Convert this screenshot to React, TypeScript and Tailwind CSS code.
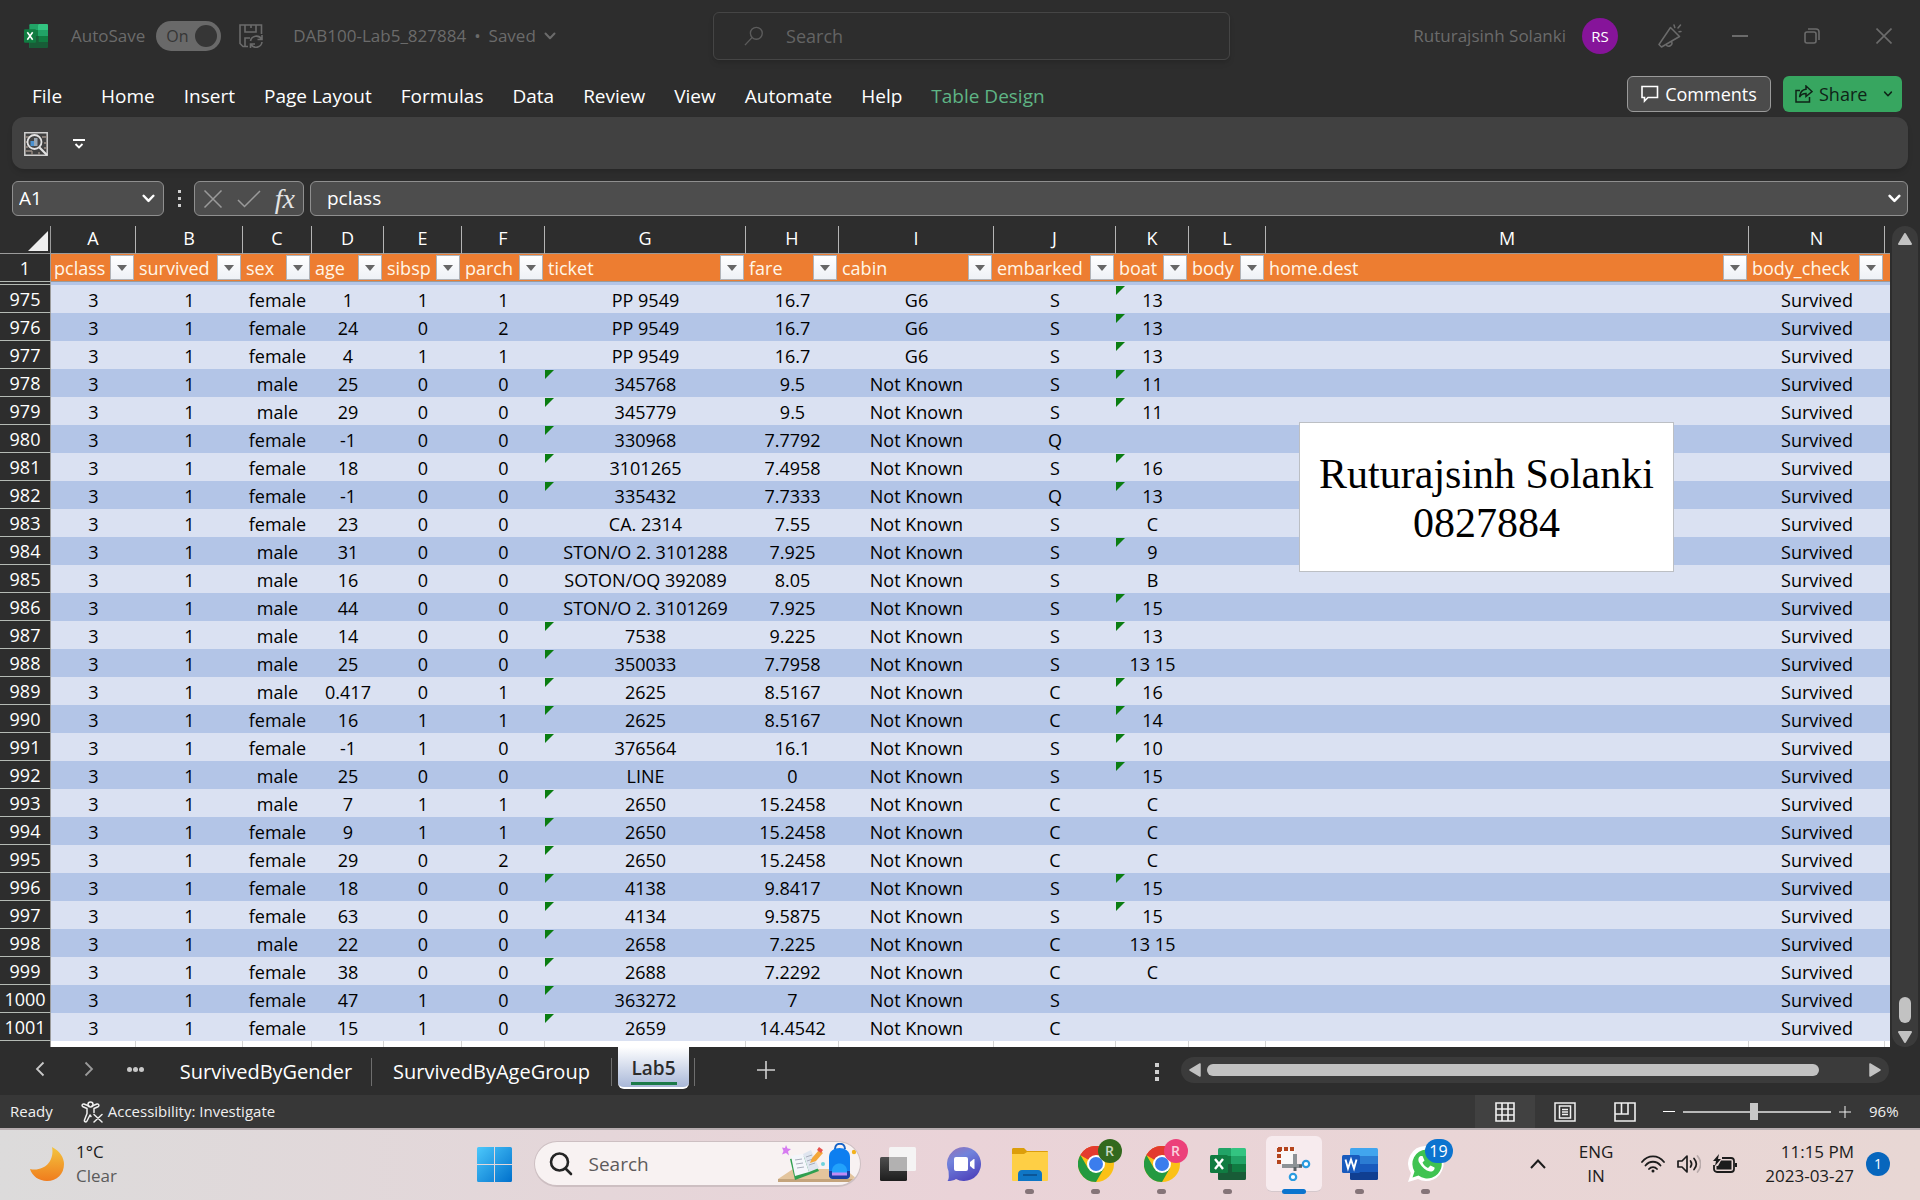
import React from "react";

type Row = {
  n: number;
  sex: string;
  age: string;
  sibsp: string;
  parch: string;
  ticket: string;
  fare: string;
  cabin: string;
  embarked: string;
  boat: string;
};

const NK = "Not Known";

// n, sex, age, sibsp, parch, ticket, fare, cabin, embarked, boat
const raw: [number, string, string, string, string, string, string, string, string, string][] = [
  [975, "female", "1", "1", "1", "PP 9549", "16.7", "G6", "S", "13"],
  [976, "female", "24", "0", "2", "PP 9549", "16.7", "G6", "S", "13"],
  [977, "female", "4", "1", "1", "PP 9549", "16.7", "G6", "S", "13"],
  [978, "male", "25", "0", "0", "345768", "9.5", NK, "S", "11"],
  [979, "male", "29", "0", "0", "345779", "9.5", NK, "S", "11"],
  [980, "female", "-1", "0", "0", "330968", "7.7792", NK, "Q", ""],
  [981, "female", "18", "0", "0", "3101265", "7.4958", NK, "S", "16"],
  [982, "female", "-1", "0", "0", "335432", "7.7333", NK, "Q", "13"],
  [983, "female", "23", "0", "0", "CA. 2314", "7.55", NK, "S", "C"],
  [984, "male", "31", "0", "0", "STON/O 2. 3101288", "7.925", NK, "S", "9"],
  [985, "male", "16", "0", "0", "SOTON/OQ 392089", "8.05", NK, "S", "B"],
  [986, "male", "44", "0", "0", "STON/O 2. 3101269", "7.925", NK, "S", "15"],
  [987, "male", "14", "0", "0", "7538", "9.225", NK, "S", "13"],
  [988, "male", "25", "0", "0", "350033", "7.7958", NK, "S", "13 15"],
  [989, "male", "0.417", "0", "1", "2625", "8.5167", NK, "C", "16"],
  [990, "female", "16", "1", "1", "2625", "8.5167", NK, "C", "14"],
  [991, "female", "-1", "1", "0", "376564", "16.1", NK, "S", "10"],
  [992, "male", "25", "0", "0", "LINE", "0", NK, "S", "15"],
  [993, "male", "7", "1", "1", "2650", "15.2458", NK, "C", "C"],
  [994, "female", "9", "1", "1", "2650", "15.2458", NK, "C", "C"],
  [995, "female", "29", "0", "2", "2650", "15.2458", NK, "C", "C"],
  [996, "female", "18", "0", "0", "4138", "9.8417", NK, "S", "15"],
  [997, "female", "63", "0", "0", "4134", "9.5875", NK, "S", "15"],
  [998, "male", "22", "0", "0", "2658", "7.225", NK, "C", "13 15"],
  [999, "female", "38", "0", "0", "2688", "7.2292", NK, "C", "C"],
  [1000, "female", "47", "1", "0", "363272", "7", NK, "S", ""],
  [1001, "female", "15", "1", "0", "2659", "14.4542", NK, "C", ""],
];

const rows: Row[] = raw.map(([n, sex, age, sibsp, parch, ticket, fare, cabin, embarked, boat]) => ({
  n, sex, age, sibsp, parch, ticket, fare, cabin, embarked, boat,
}));

const columns = [
  { letter: "A", name: "pclass", width: "w-[85px]" },
  { letter: "B", name: "survived", width: "w-[107px]" },
  { letter: "C", name: "sex", width: "w-[69px]" },
  { letter: "D", name: "age", width: "w-[72px]" },
  { letter: "E", name: "sibsp", width: "w-[78px]" },
  { letter: "F", name: "parch", width: "w-[83px]" },
  { letter: "G", name: "ticket", width: "w-[201px]" },
  { letter: "H", name: "fare", width: "w-[93px]" },
  { letter: "I", name: "cabin", width: "w-[155px]" },
  { letter: "J", name: "embarked", width: "w-[122px]" },
  { letter: "K", name: "boat", width: "w-[73px]" },
  { letter: "L", name: "body", width: "w-[77px]" },
  { letter: "M", name: "home.dest", width: "w-auto" },
  { letter: "N", name: "body_check", width: "w-[136px]" },
];

const isNumeric = (s: string) => /^\d+$/.test(s);

function Chevron({ className = "w-3 h-2", width = 2 }: { className?: string; width?: number }) {
  return (
    <svg viewBox="0 0 12 8" className={className} fill="none" stroke="currentColor" strokeWidth={width} strokeLinecap="round" strokeLinejoin="round">
      <path d="M1.5 1.5 6 6.2 10.5 1.5" />
    </svg>
  );
}

function ExcelLogo({ className }: { className: string }) {
  return (
    <svg viewBox="0 0 36 32" preserveAspectRatio="none" className={className}>
      <rect x="8" y="0" width="14" height="32" rx="1.5" fill="#21a366" />
      <rect x="21" y="0" width="15" height="9" rx="1.5" fill="#33c481" />
      <rect x="8" y="8" width="14" height="8" fill="#107c41" />
      <rect x="21" y="8" width="15" height="8" fill="#21a366" />
      <rect x="21" y="16" width="15" height="8" fill="#107c41" />
      <path d="M8 16h14v8h14v6.500a1.500 1.500 0 0 1-1.500 1.500h-25A1.500 1.500 0 0 1 8 30.500z" fill="#185c37" />
      <rect x="0" y="7" width="18" height="18" rx="1.500" fill="#107c41" />
      <path d="m5 11 8 10M13 11 5 21" stroke="#fff" strokeWidth="2.400" fill="none" />
    </svg>
  );
}

function WordLogo() {
  return (
    <svg viewBox="0 0 36 32" className="h-8 w-9">
      <rect x="8" y="0" width="28" height="9" rx="1.500" fill="#41a5ee" />
      <rect x="8" y="8" width="28" height="8" fill="#2b7cd3" />
      <rect x="8" y="16" width="28" height="8" fill="#185abd" />
      <path d="M8 24h28v6.500a1.500 1.500 0 0 1-1.500 1.500h-25A1.500 1.500 0 0 1 8 30.500z" fill="#103f91" />
      <rect x="0" y="7" width="18" height="18" rx="1.500" fill="#185abd" />
      <path d="m3.500 11.500 2.500 9 3-9 3 9 2.500-9" stroke="#fff" strokeWidth="1.900" fill="none" />
    </svg>
  );
}

function ChromeLogo() {
  return (
    <svg viewBox="0 0 36 36" className="size-9">
      <circle cx="18" cy="18" r="18" fill="#fbc116" />
      <path d="M18 18 2.400 9A18 18 0 0 1 33.600 9H18z" fill="#e33b2e" />
      <path d="M2.400 9A18 18 0 0 0 18 36l7.800-13.500L10.200 22.500z" fill="#249a41" />
      <path d="M2.400 9A18 18 0 0 1 33.600 9H18l-7.800 4.500z" fill="#e33b2e" />
      <circle cx="18" cy="18" r="9" fill="#fff" />
      <circle cx="18" cy="18" r="7" fill="#3b7ded" />
    </svg>
  );
}

function TitleBar() {
  return (
    <header className="flex h-[72px] items-center text-[17px] text-[#6b6b6b]">
      <div className="flex min-w-0 flex-1 items-center pl-6">
        <ExcelLogo className="h-6 w-6" />
        <label className="ml-[23px] flex items-center gap-[11px]">
          AutoSave
          <input type="checkbox" defaultChecked className="peer sr-only" />
          <span className="flex h-[30px] w-[65px] items-center justify-between rounded-full bg-[#696969] pr-1 pl-2.5 text-base text-[#363636]">
            On
            <span className="size-[22px] rounded-full bg-[#363636]" />
          </span>
        </label>
        <button aria-label="Save" className="ml-[18px]">
          <svg viewBox="0 0 24 24" className="size-6" fill="none" stroke="currentColor" strokeWidth="1.600">
            <path d="M9 22.500H4L1 19.500V1h21.500v9M6 1v7h11V1M6 22v-8h5M12 1v3" />
            <path d="M11.500 17a6 6 0 0 1 11-2M23 11v4.500h-4.500M23 18a6 6 0 0 1-11 2.500M11.500 24v-4h4.500" />
          </svg>
        </button>
        <button className="ml-[30px] flex items-center gap-2 whitespace-nowrap">
          <span>DAB100-Lab5_827884</span>
          <span>•</span>
          <span>Saved</span>
          <Chevron className="h-2 w-3" />
        </button>
      </div>
      <label className="flex h-12 w-[517px] items-center gap-[22px] rounded-md border border-[#454545] pl-[30px] text-[#5c5c5c] shadow-md">
        <svg viewBox="0 0 22 22" className="size-[22px]" fill="none" stroke="currentColor" strokeWidth="1.500">
          <circle cx="13.500" cy="8" r="6.500" />
          <path d="M9 12.500 1 21" />
        </svg>
        <input aria-label="Search" placeholder="Search" className="w-full bg-transparent text-lg outline-none placeholder:text-[#646464]" />
      </label>
      <div className="flex w-[690px] items-center justify-end">
        <span className="whitespace-nowrap">Ruturajsinh Solanki</span>
        <span className="ml-4 grid size-9 place-items-center rounded-full bg-[#86149a] text-[15px] text-white">RS</span>
        <button aria-label="What's new" className="grid w-[104px] place-items-center">
          <svg viewBox="0 0 24 24" className="size-6" fill="none" stroke="currentColor" strokeWidth="1.500" strokeLinejoin="round" strokeLinecap="round">
            <path d="M12.500 3.500 1 20.500 3.500 23l18-10.500zM8 20.500a3 3 0 0 0 5.500-3M16 1l.8 2.500M22.500 1 20 4M23 7.500l-2 .2" />
          </svg>
        </button>
        <button aria-label="Minimize" className="grid w-9 place-items-center">
          <span className="h-0.5 w-4 bg-current" />
        </button>
        <button aria-label="Restore" className="ml-9 grid w-9 place-items-center">
          <svg viewBox="0 0 16 16" className="size-4" fill="none" stroke="currentColor" strokeWidth="1.600">
            <rect x="1" y="4" width="11" height="11" rx="2" />
            <path d="M4 1h8a3 3 0 0 1 3 3v8" />
          </svg>
        </button>
        <button aria-label="Close" className="mr-[18px] ml-9 grid w-9 place-items-center">
          <svg viewBox="0 0 16 16" className="size-4" fill="none" stroke="currentColor" strokeWidth="1.600">
            <path d="m.5.5 15 15M15.500.5l-15 15" />
          </svg>
        </button>
      </div>
    </header>
  );
}

const menus = ["File", "Home", "Insert", "Page Layout", "Formulas", "Data", "Review", "View", "Automate", "Help"];

function MenuBar() {
  return (
    <nav className="flex h-[45px] items-start pr-[18px] pl-[18px] text-[19px] text-white">
      <div className="flex h-12 flex-1 items-center gap-px">
        {menus.map((m) => (
          <button key={m} className="px-[14px] whitespace-nowrap first:mr-2.5">{m}</button>
        ))}
        <button className="px-[14px] whitespace-nowrap text-[#5fb585]">Table Design</button>
      </div>
      <div className="flex gap-3 pt-1">
        <button className="flex h-9 w-[144px] items-center justify-center gap-1.5 rounded-md border border-[#9a9a9a] bg-[#4b4b4b] text-lg">
          <svg viewBox="0 0 18 18" className="size-[18px]" fill="none" stroke="currentColor" strokeWidth="1.600">
            <path d="M1 1.500h15.500v11H7L3.500 16v-3.500H1z" />
          </svg>
          Comments
        </button>
        <button className="flex h-9 w-[119px] items-center gap-1.5 rounded-md bg-[#37a660] pl-3 text-lg text-[#0f2417]">
          <svg viewBox="0 0 18 18" className="size-[18px]" fill="none" stroke="currentColor" strokeWidth="1.500">
            <path d="M5 5.500H1V17h13.500v-5M11 1l6 5.500-6 5V8.500c-3 0-5 1-6.500 3.500C5 8 7 4.500 11 4.200z" />
          </svg>
          Share
          <Chevron className="ml-2.5 h-1.5 w-2.5" />
        </button>
      </div>
    </nav>
  );
}

function FormulaBar() {
  const box = "flex h-[35px] items-center rounded-md border border-[#8f8f8f] bg-[#4d4d4d]";
  return (
    <div className="mt-3 flex px-3 text-lg text-white">
      <label className={`${box} w-[152px] pr-2 pl-1.5`}>
        <input aria-label="Name box" defaultValue="A1" className="w-full min-w-0 bg-transparent text-[19px] outline-none" />
        <Chevron className="h-[9px] w-[13px] shrink-0" width={2.2} />
      </label>
      <span className="flex w-[30px] flex-col items-center justify-center gap-1">
        <i className="size-[3px] bg-[#d0d0d0]" />
        <i className="size-[3px] bg-[#d0d0d0]" />
        <i className="size-[3px] bg-[#d0d0d0]" />
      </span>
      <div className={`${box} w-[110px] justify-between px-2 text-[#9a9a9a]`}>
        <button aria-label="Cancel">
          <svg viewBox="0 0 20 18" className="h-[18px] w-5" fill="none" stroke="currentColor" strokeWidth="1.500"><path d="m1.500.5 17 17M18.500.5l-17 17" /></svg>
        </button>
        <button aria-label="Enter">
          <svg viewBox="0 0 24 18" className="h-[18px] w-6" fill="none" stroke="currentColor" strokeWidth="1.500"><path d="m1 10 6.500 6.500L23 1" /></svg>
        </button>
        <button aria-label="Insert function" className="font-['Liberation_Serif',serif] text-[28px] leading-none text-[#e4e4e4] italic">fx</button>
      </div>
      <label className={`${box} ml-1.5 flex-1 pr-1.5 pl-4`}>
        <input aria-label="Formula" defaultValue="pclass" className="w-full bg-transparent text-[19px] outline-none" />
        <Chevron className="h-[9px] w-[13px]" width={2.4} />
      </label>
    </div>
  );
}

function Cell({ v, flag, odd }: { v: string; flag?: boolean; odd: boolean }) {
  return (
    <td className={`relative h-7 p-0 pt-0.5 text-center leading-[26px] whitespace-nowrap ${odd ? "bg-[#b3c5e7]" : "bg-[#dae1f2]"}`}>
      {flag && <i className="absolute top-px left-0 h-[9px] w-[9px] bg-[#0a7d12] [clip-path:polygon(0_0,100%_0,0_100%)]" />}
      {v}
    </td>
  );
}

function Sheet() {
  const head = "border-r border-r-[#9b9b9b] border-b border-b-[#b4bab4] bg-[#2d2d2d] p-0 text-center font-normal text-white";
  return (
    <div className="relative min-w-0 flex-1">
      <table className="w-full table-fixed border-separate border-spacing-0 text-lg text-black">
        <colgroup>
          <col className="w-[51px]" />
          {columns.map((c) => <col key={c.letter} className={c.width} />)}
          <col className="w-[5px]" />
        </colgroup>
        <thead>
          <tr>
            <th className="h-7 border-r border-b border-r-[#9b9b9b] border-b-[#9b9b9b] p-0">
              <svg viewBox="0 0 20 20" className="mt-0.5 mr-0.5 ml-auto size-5"><path d="M20 0v20H0z" fill="#efefef" /></svg>
            </th>
            {columns.map((c) => (
              <th key={c.letter} className="h-7 border-r border-b border-r-[#b4b4b4] border-b-[#9b9b9b] p-0 pb-0.5 text-center leading-[25px] font-normal text-white">{c.letter}</th>
            ))}
            <th className="border-b border-b-[#9b9b9b] p-0" />
          </tr>
          <tr>
            <th className={`${head} h-7 leading-[26px]`}>1</th>
            {columns.map((c) => (
              <th key={c.letter} className="h-7 border-b border-b-[#9b9b9b] bg-[#ed7d31] p-0 font-normal text-[#fff6e8]">
                <div className="flex items-center justify-between pr-0.5 pl-[3px]">
                  <span className="leading-[26px]">{c.name}</span>
                  <button aria-label={`Filter ${c.name}`} className="grid h-[25px] w-6 shrink-0 place-items-center border border-[#b0b3b8] bg-linear-to-b from-white to-[#eef1f6]">
                    <svg viewBox="0 0 10 6" className="h-1.5 w-2.5"><path d="M0 0h10L5 6z" fill="#666" /></svg>
                  </button>
                </div>
              </th>
            ))}
            <th className="border-b border-b-[#9b9b9b] bg-[#ed7d31] p-0" />
          </tr>
        </thead>
        <tbody>
          <tr>
            <td className={`${head} h-[3px]`} />
            <td colSpan={15} className="h-[3px] bg-[#b3c5e7] p-0" />
          </tr>
          {rows.map((r) => {
            const odd = r.n % 2 === 0;
            return (
              <tr key={r.n}>
                <th scope="row" className={`${head} h-7 pt-0.5 leading-[25px]`}>{r.n}</th>
                <Cell odd={odd} v="3" />
                <Cell odd={odd} v="1" />
                <Cell odd={odd} v={r.sex} />
                <Cell odd={odd} v={r.age} />
                <Cell odd={odd} v={r.sibsp} />
                <Cell odd={odd} v={r.parch} />
                <Cell odd={odd} v={r.ticket} flag={isNumeric(r.ticket)} />
                <Cell odd={odd} v={r.fare} />
                <Cell odd={odd} v={r.cabin} />
                <Cell odd={odd} v={r.embarked} />
                <Cell odd={odd} v={r.boat} flag={isNumeric(r.boat)} />
                <Cell odd={odd} v="" />
                <Cell odd={odd} v="" />
                <Cell odd={odd} v="Survived" />
                <Cell odd={odd} v="" />
              </tr>
            );
          })}
          <tr>
            <td className="h-1.5 border-r border-[#9b9b9b] p-0" />
            {columns.map((c) => <td key={c.letter} className="h-1.5 border-r border-[#d4d4d4] bg-white p-0" />)}
            <td className="bg-white p-0" />
          </tr>
        </tbody>
      </table>
      <div className="absolute top-[196px] right-[216px] flex h-[150px] w-[375px] flex-col items-center justify-center border border-[#bcbfc4] bg-white pt-1 font-['Liberation_Serif',serif] text-[42px] leading-[49px] whitespace-nowrap text-black">
        <p>Ruturajsinh Solanki</p>
        <p>0827884</p>
      </div>
    </div>
  );
}

function VerticalScroll() {
  return (
    <div className="mr-0.5 ml-0.5 flex w-[26px] flex-col items-center rounded-full bg-[#3b3b3b] pt-[7px] pb-1">
      <svg viewBox="0 0 14 12" className="h-3 w-3.5"><path d="M7 1 13 11H1z" fill="#c2c2c2" stroke="#c2c2c2" strokeWidth="2" strokeLinejoin="round" /></svg>
      <span className="mt-auto h-[26px] w-3 rounded-full bg-[#c2c2c2]" />
      <svg viewBox="0 0 14 12" className="mt-2 h-3 w-3.5"><path d="M7 11 1 1h12z" fill="#c2c2c2" stroke="#c2c2c2" strokeWidth="2" strokeLinejoin="round" /></svg>
    </div>
  );
}

function SheetTabs() {
  return (
    <div className="flex h-12 items-start text-[20px] text-white">
      <div className="flex h-11 items-center pl-[35px] text-[#c8c8c8]">
        <button aria-label="Previous sheet"><svg viewBox="0 0 10 16" className="h-4 w-2.5" fill="none" stroke="currentColor" strokeWidth="1.800"><path d="M8.500 1.500 2 8l6.500 6.500" /></svg></button>
        <button aria-label="Next sheet" className="ml-[39px] text-[#9a9a9a]"><svg viewBox="0 0 10 16" className="h-4 w-2.5" fill="none" stroke="currentColor" strokeWidth="1.800"><path d="M1.500 1.500 8 8l-6.500 6.500" /></svg></button>
        <button aria-label="More sheets" className="ml-[33px] flex gap-px">
          <i className="size-[5px] rounded-full bg-current" /><i className="size-[5px] rounded-full bg-current" /><i className="size-[5px] rounded-full bg-current" />
        </button>
      </div>
      <button className="mt-[7px] ml-[27px] h-9 w-[200px] pr-2.5 text-center">SurvivedByGender</button>
      <span className="mt-[11px] h-7 w-px bg-[#6e6e6e]" />
      <button className="mt-[7px] h-9 w-[239px] text-center">SurvivedByAgeGroup</button>
      <span className="mt-[11px] h-7 w-px bg-[#6e6e6e]" />
      <button className="ml-1.5 flex h-[42px] w-[71px] flex-col items-center rounded-b-md border-b-2 border-white bg-linear-to-b from-white to-[#a9b8d8] pt-1 text-[19px] leading-7 font-semibold text-[#2c2c2c]">
        <span className="pt-[3px]">Lab5</span>
        <span className="h-[3px] w-[46px] bg-[#1b7a48]" />
      </button>
      <span className="mt-[11px] ml-[5px] h-7 w-px bg-[#6e6e6e]" />
      <button aria-label="New sheet" className="mt-[14px] ml-[62px]"><svg viewBox="0 0 18 18" className="size-[18px]" stroke="#d0d0d0" strokeWidth="1.600"><path d="M9 0v18M0 9h18" /></svg></button>
      <div className="flex-1" />
      <span className="mt-4 mr-[22px] flex flex-col gap-[3px]">
        <i className="size-1 bg-[#d0d0d0]" /><i className="size-1 bg-[#d0d0d0]" /><i className="size-1 bg-[#d0d0d0]" />
      </span>
      <div className="mt-[10px] mr-[31px] flex h-[26px] w-[708px] items-center rounded-full bg-[#3b3b3b] px-2">
        <svg viewBox="0 0 12 14" className="h-3.5 w-3"><path d="M11 1v12L1 7z" fill="#c2c2c2" stroke="#c2c2c2" strokeWidth="1.500" strokeLinejoin="round" /></svg>
        <span className="ml-1.5 h-3 w-[612px] rounded-full bg-[#c2c2c2]" />
        <svg viewBox="0 0 12 14" className="ml-auto h-3.5 w-3"><path d="M1 1v12l10-6z" fill="#c2c2c2" stroke="#c2c2c2" strokeWidth="1.500" strokeLinejoin="round" /></svg>
      </div>
    </div>
  );
}

function StatusBar() {
  return (
    <div className="flex h-[33px] items-center bg-[#373737] pl-2.5 text-[15px] text-[#f0f0f0]">
      <span>Ready</span>
      <button className="ml-7 flex items-center gap-[5px]">
        <svg viewBox="0 0 22 22" className="size-[22px]" fill="none" stroke="currentColor" strokeWidth="1.500" strokeLinecap="round" strokeLinejoin="round">
          <circle cx="9.500" cy="3.500" r="2.500" />
          <path d="M8 5 3 3C1 2.500.5 5 2 5.800l4 1.700v5L3.500 19c-.5 2 1.800 2.500 2.500 1l3-6 1 1.500M11 5l5-2c2-.5 2.500 2 1 2.800l-4 1.700v4M13 13.500l8 7.500M21 13.500 13 21" />
        </svg>
        Accessibility: Investigate
      </button>
      <div className="flex-1" />
      <button aria-label="Normal view" className="grid h-full w-[60px] place-items-center bg-[#414141]">
        <svg viewBox="0 0 20 20" className="size-5" fill="none" stroke="currentColor" strokeWidth="1.600"><path d="M1 1h18v18H1zM7 1v18M13 1v18M1 7h18M1 13h18" /></svg>
      </button>
      <button aria-label="Page layout view" className="grid h-full w-[60px] place-items-center">
        <svg viewBox="0 0 22 20" className="h-5 w-[22px]" fill="none" stroke="currentColor" strokeWidth="1.500"><path d="M1 1h20v18H1zM5.500 4h11v12h-11zM8 7.500h6M8 10h6M8 12.500h6" /></svg>
      </button>
      <button aria-label="Page break preview" className="grid h-full w-[60px] place-items-center">
        <svg viewBox="0 0 22 20" className="h-5 w-[22px]" fill="none" stroke="currentColor" strokeWidth="1.600"><path d="M1 1h20v18H1zM1 12h13V1M7.500 1v11" /></svg>
      </button>
      <button aria-label="Zoom out" className="ml-2 grid h-5 w-3 place-items-center"><span className="h-px w-3 bg-white" /></button>
      <label className="relative ml-2 flex h-5 w-[148px] items-center">
        <input type="range" aria-label="Zoom" min={10} max={190} defaultValue={96} className="h-0.5 w-full appearance-none bg-[#b8b8b8] [&::-webkit-slider-thumb]:h-[17px] [&::-webkit-slider-thumb]:w-2 [&::-webkit-slider-thumb]:appearance-none [&::-webkit-slider-thumb]:bg-[#c8c8c8]" />
      </label>
      <button aria-label="Zoom in" className="ml-2 grid h-5 w-3 place-items-center"><svg viewBox="0 0 12 12" className="size-3" stroke="currentColor"><path d="M6 0v12M0 6h12" /></svg></button>
      <span className="mr-[19px] ml-[18px] w-8">96%</span>
    </div>
  );
}

function TaskItem({ label, children, state }: { label: string; children: React.ReactNode; state?: "open" | "active" }) {
  return (
    <button aria-label={label} className="relative grid h-[72px] w-[66px] place-items-center">
      {state === "active" && <span className="absolute inset-x-[5px] top-2 bottom-2 rounded-md border-b border-[#d5c8cc] bg-[#f7ebee]" />}
      <span className="relative">{children}</span>
      {state === "open" && <span className="absolute bottom-1.5 h-[5px] w-[9px] rounded-full bg-[#857478]" />}
      {state === "active" && <span className="absolute bottom-1.5 h-[5px] w-6 rounded-full bg-[#0b74ce]" />}
    </button>
  );
}

function Taskbar() {
  return (
    <footer className="grid h-[72px] grid-cols-[1fr_auto_1fr] border-t-2 border-[#b7adb0] bg-linear-to-r from-[#dcdbdb] via-[#ead3d8] to-[#e8d7d4] text-[17px] leading-6 text-[#1c1c1c]">
      <div className="flex h-[68px] items-center pl-[30px]">
        <svg viewBox="0 0 34 34" className="size-[34px]">
          <defs><linearGradient id="moon" x1="0" y1="0" x2="0" y2="1"><stop stopColor="#f3c53f" /><stop offset="1" stopColor="#f07c1d" /></linearGradient></defs>
          <path d="M22 0c8 4 12 11 12 17 0 10-7 17-17 17C9 34 2 29 0 22c13 3 25-7 22-22z" fill="url(#moon)" />
        </svg>
        <div className="ml-3">
          <p>1°C</p>
          <p className="text-[#5b5b5b]">Clear</p>
        </div>
      </div>

      <div className="flex h-[68px] items-center">
        <TaskItem label="Start">
          <svg viewBox="0 0 35 35" className="size-[35px]">
            <defs><linearGradient id="win" x1="0" y1="0" x2="1" y2="1"><stop stopColor="#4cc8fb" /><stop offset="1" stopColor="#0070cc" /></linearGradient></defs>
            <path d="M1.500 0H17v17H0V1.500A1.500 1.500 0 0 1 1.500 0zM18 0h15.500A1.500 1.500 0 0 1 35 1.500V17H18zM0 18h17v17H1.500A1.500 1.500 0 0 1 0 33.500zM18 18h17v15.500a1.500 1.500 0 0 1-1.500 1.500H18z" fill="url(#win)" />
          </svg>
        </TaskItem>
        <label className="mr-1 ml-1.5 flex h-[46px] w-[327px] items-center overflow-hidden rounded-full border border-b-2 border-[#cdbfc2] bg-[#f8f2f2] pl-3.5">
          <svg viewBox="0 0 24 24" className="size-6 shrink-0" fill="none" stroke="#242424" strokeWidth="2.600" strokeLinecap="round"><circle cx="10.500" cy="10" r="8.500" /><path d="m17 17 5 5" /></svg>
          <input aria-label="Search Windows" placeholder="Search" className="ml-4 w-full min-w-0 bg-transparent text-[19px] outline-none placeholder:text-[#5e5a5b]" />
          <svg viewBox="0 0 82 42" className="h-[42px] w-[82px] shrink-0">
            <path d="M0 36 15 26h52l12 10z" fill="#e3c49c" />
            <path d="M0 36h78l-5 3H0z" fill="#c4a47c" />
            <path d="m12 16 20-4 9 16-24 9z" fill="#2f9f50" />
            <path d="m13 13 12-2 6 18-14 4z" fill="#f4f6fb" />
            <path d="m25 11 8-4 8 18-10 4z" fill="#dfe5ef" />
            <path d="m17 17 7-1M18 21l7-1M19 25l7-1M28 14l6-2M29 18l6-2M31 22l6-2" stroke="#a7adbb" />
            <path d="m32 20 2-5 7-8 4 3-7 8z" fill="#f3a73a" />
            <path d="m39 7 2-3 4 3-2 3z" fill="#e8534d" />
            <path d="M57 6c0-7 10-7 10 0" fill="none" stroke="#1763c6" strokeWidth="2" />
            <path d="M51 14c0-12 21-12 21 0v17c0 4-2 5-5 5H56c-3 0-5-1-5-5z" fill="#0d7ff0" />
            <path d="M51 28h21v4c0 3-2 4-5 4H56c-3 0-5-1-5-4z" fill="#1a3fa6" />
            <path d="M54 28c0-10 15-10 15 0v3H54z" fill="#22a2fb" />
            <path d="M54 31h15" stroke="#bf8bf5" strokeWidth="3" />
            <path d="m8 2 1.500 3.500L13 6l-3 2.500 1 4L8 10l-4 1.500L5.500 8 4 4.500l3 .5z" fill="#d67bf0" />
            <circle cx="76" cy="9" r="2.200" fill="#f3b21c" />
            <circle cx="45" cy="21" r="2" fill="#6fd2dc" />
          </svg>
        </label>
        <TaskItem label="Task view">
          <svg viewBox="0 0 36 34" className="h-[34px] w-9">
            <defs>
              <linearGradient id="tvd" x1="0" y1="0" x2="0" y2="1"><stop stopColor="#4e4e4e" /><stop offset="1" stopColor="#1d1d1d" /></linearGradient>
            </defs>
            <rect x="0" y="10" width="27" height="24" rx="1.500" fill="url(#tvd)" />
            <rect x="9" y="0" width="27" height="24" rx="1.500" fill="#f5f4f4" />
            <path d="M9 10h18v14H9z" fill="#b2b1b1" />
          </svg>
        </TaskItem>
        <TaskItem label="Chat">
          <svg viewBox="0 0 34 34" className="size-[34px]">
            <defs><linearGradient id="chat" x1="0" y1="0" x2="0.500" y2="1"><stop stopColor="#9570b4" /><stop offset="0.400" stopColor="#7183dc" /><stop offset="1" stopColor="#5149bf" /></linearGradient></defs>
            <path d="M17 0a17 17 0 1 1-8 32c-2 1.500-5 2-8.500 2C2 32 2 30 1.500 24A17 17 0 0 1 17 0z" fill="url(#chat)" />
            <rect x="7" y="10" width="14" height="14" rx="2" fill="#fff" />
            <path d="M23 15c2-1 2.500-3 4.500-3v10c-2 0-2.500-2-4.500-3z" fill="#fff" />
          </svg>
        </TaskItem>
        <TaskItem label="File Explorer" state="open">
          <svg viewBox="0 0 36 33" className="h-[33px] w-9">
            <path d="M0 1.500C0 .6.600 0 1.500 0H12l3 3h20c.6 0 1 .5 1 1v6H0z" fill="#dc9e0b" />
            <path d="M0 6h12l3-2h21v27.500c0 1-.5 1.500-1.500 1.500h-33C.5 33 0 32.500 0 31.500z" fill="#fecf45" />
            <path d="M6 33v-7c0-2 1.500-4 4-4h16c2.500 0 4 2 4 4v7z" fill="#0f76c5" />
            <path d="M11 27h14" stroke="#0b4d87" strokeWidth="1.500" />
          </svg>
        </TaskItem>
        <TaskItem label="Chrome, profile R" state="open">
          <ChromeLogo />
          <span className="absolute -top-[7px] -right-2 grid size-6 place-items-center rounded-full bg-[#33691e] text-sm font-semibold text-[#c9d8c2]">R</span>
        </TaskItem>
        <TaskItem label="Chrome, second profile R" state="open">
          <ChromeLogo />
          <span className="absolute -top-[7px] -right-2 grid size-6 place-items-center rounded-full bg-[#ec407a] text-sm font-semibold text-[#fbd0de]">R</span>
        </TaskItem>
        <TaskItem label="Excel" state="open"><ExcelLogo className="h-8 w-9" /></TaskItem>
        <TaskItem label="Snipping Tool" state="active">
          <svg viewBox="0 0 34 34" className="size-[34px]" fill="none">
            <path d="M2 17V2h16v15z" fill="#faf8f8" />
            <path d="M1 2h16M2 1v16" stroke="#b5451d" strokeWidth="4" strokeDasharray="4 2" />
            <path d="M18 7v13M5 19h20" stroke="#8d9296" strokeWidth="4" />
            <path d="M18 20v4M22 19h3" stroke="#5a6064" strokeWidth="3" />
            <circle cx="29" cy="17" r="3.200" fill="#fff" stroke="#2a9be0" strokeWidth="2.200" />
            <circle cx="16" cy="30" r="3.200" fill="#fff" stroke="#2a9be0" strokeWidth="2.200" />
          </svg>
        </TaskItem>
        <TaskItem label="Word" state="open"><WordLogo /></TaskItem>
        <TaskItem label="WhatsApp, 19 unread" state="open">
          <svg viewBox="0 0 36 36" className="size-9">
            <path d="M18 0a17.500 17.500 0 1 1-8 33L0 36l3-9A17.500 17.500 0 0 1 18 0z" fill="#fff" />
            <path d="M18 3.500a14.500 14.500 0 1 1-7.500 26L4.500 31.500l2-6A14.500 14.500 0 0 1 18 3.500z" fill="#3fc351" />
            <path d="M12.500 10c-2 1-3 4-1 7 2.500 4.500 6 7.500 10.500 8.500 3 .5 5-2 4.500-4l-4-2-2.500 2.500c-2.500-1-4.500-3-5.500-5.500l2-2-2-4.500z" fill="#fff" />
          </svg>
          <span className="absolute -top-[7px] -right-[9px] grid h-6 w-7 place-items-center rounded-full bg-[#0c74cf] text-base text-white">19</span>
        </TaskItem>
      </div>

      <div className="flex h-[68px] items-center justify-end pr-[30px]">
        <button aria-label="Show hidden icons"><svg viewBox="0 0 16 10" className="h-2.5 w-4" fill="none" stroke="currentColor" strokeWidth="2"><path d="m1 9 7-7.500L15 9" /></svg></button>
        <div className="ml-[30px] w-10 text-center"><p>ENG</p><p>IN</p></div>
        <svg viewBox="0 0 24 18" className="ml-[25px] h-[18px] w-6" fill="none" stroke="currentColor" strokeWidth="1.800" strokeLinecap="round">
          <path d="M1 7c6-7.500 16-7.500 22 0M4.500 10.500c4-5 11-5 15 0M8 14c2-2.500 6-2.500 8 0" /><circle cx="12" cy="16" r="1.500" fill="currentColor" stroke="none" />
        </svg>
        <svg viewBox="0 0 24 20" className="ml-3 h-5 w-6" fill="none" stroke="currentColor" strokeWidth="1.700" strokeLinejoin="round" strokeLinecap="round">
          <path d="M1 7v6h4l5 5V2L5 7zM13.500 7c1.500 2 1.500 4 0 6M17 4.500c3 3.500 3 7.500 0 11" /><path d="M20.500 2c4 5 4 11 0 16" stroke="#b9abab" />
        </svg>
        <svg viewBox="0 0 24 20" className="ml-3 h-5 w-6" fill="none" stroke="currentColor" strokeWidth="1.800" strokeLinejoin="round">
          <path d="M9 4h9a3 3 0 0 1 3 3v8a3 3 0 0 1-3 3H4a3 3 0 0 1-3-3v-4" /><path d="M8 6.500h10.500v9H3.500v-3.500H5z" fill="currentColor" stroke="none" /><path d="M22 9h2v4h-2z" fill="currentColor" stroke="none" /><path d="M6 0 0 7h3l-1 5 6-7H5z" fill="currentColor" stroke="none" />
        </svg>
        <div className="ml-5 w-[97px] text-right whitespace-nowrap"><p>11:15 PM</p><p>2023-03-27</p></div>
        <span className="ml-3 grid size-6 place-items-center rounded-full bg-[#0766bd] text-sm text-white">1</span>
      </div>
    </footer>
  );
}

export default function App() {
  return (
    <div className="flex min-h-screen flex-col bg-[#2d2d2d] font-['Open_Sans','Noto_Sans',sans-serif]">
      <TitleBar />
      <MenuBar />
      <div className="mx-3 flex h-[52px] items-center gap-[25px] rounded-xl bg-[#414141] pt-0.5 pl-3 text-white shadow-md">
        <button aria-label="Print preview">
          <svg viewBox="0 0 24 24" className="size-6" fill="none">
            <path d="M.8.800h22.400v22.400H.8z" stroke="#cfcfcf" strokeWidth="1.500" />
            <path d="M1 5h5M1 10h3M1 15h3M1 19h7M8 19v4M15 20v3M18 5h5M20 11h3M20 16h3" stroke="#9b8f86" strokeWidth="1.300" />
            <circle cx="10.500" cy="10" r="7" fill="#444" stroke="#e3e3e3" strokeWidth="1.800" />
            <path d="M6.500 9h4v5h-4z" fill="#4a91cf" /><path d="M10 6h3.500v8H10z" fill="#9aa6b2" />
            <path d="m15.500 15.500 7.500 7.500" stroke="#e3e3e3" strokeWidth="2.200" />
          </svg>
        </button>
        <button aria-label="Customize toolbar">
          <svg viewBox="0 0 12 10" className="h-2.5 w-3" fill="none" stroke="currentColor" strokeWidth="1.800"><path d="M0 1h12M2.500 5 6 8.500 9.500 5" /></svg>
        </button>
      </div>
      <FormulaBar />
      <div className="mt-2.5 flex">
        <Sheet />
        <VerticalScroll />
      </div>
      <SheetTabs />
      <StatusBar />
      <Taskbar />
    </div>
  );
}
